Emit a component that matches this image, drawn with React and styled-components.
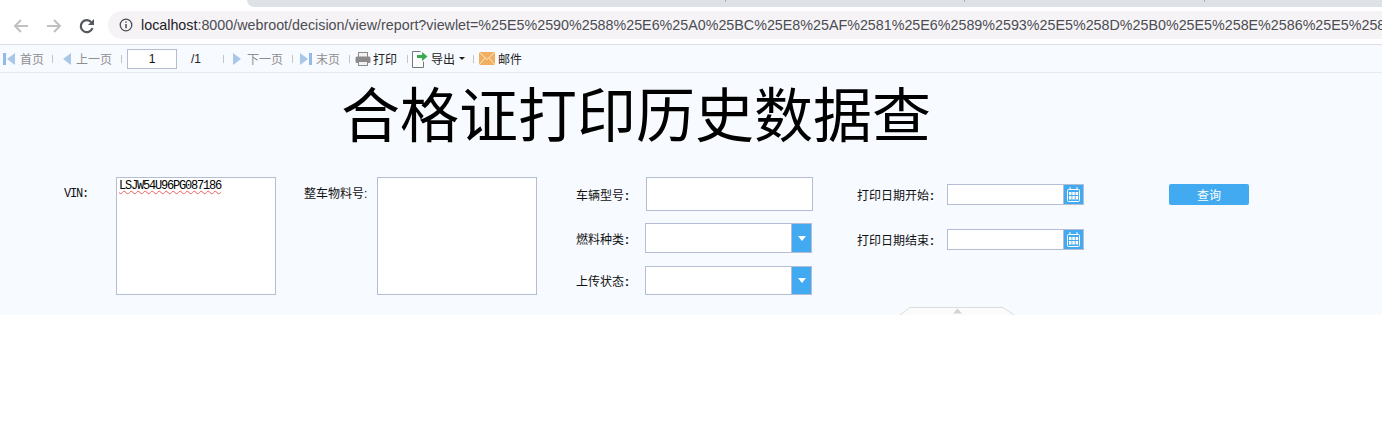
import React from 'react';
import styled, { createGlobalStyle } from 'styled-components';

const Global = createGlobalStyle`
  html, body { margin: 0; padding: 0; background: #fff; }
  body { font-family: "Liberation Sans", "Noto Sans CJK SC", sans-serif; font-size: 12px; color: #000; overflow: hidden; }
`;

const TabStrip = styled.div`
  height: 7px;
  padding-left: 247px;
`;
const TabFill = styled.div`
  height: 7px;
  display: flex;
  background: #dee1e6;
  border-bottom-left-radius: 8px;
`;
const TabSlot = styled.div`
  width: ${p => p.$w}px;
  height: 2px;
  box-sizing: border-box;
  border-right: 1px solid #a9aeb4;
`;
const BrowserBar = styled.div`
  height: 37px;
  display: flex;
  align-items: center;
  border-bottom: 1px solid #dcdce4;
  box-sizing: content-box;
  overflow: hidden;
`;
const NavIcons = styled.div`
  display: flex;
  align-items: center;
  gap: 15px;
  padding-left: 12px;
  width: 108px;
  box-sizing: border-box;
  flex: none;
`;
const Omnibox = styled.div`
  flex: 1;
  height: 28px;
  margin-top: -1px;
  background: #f6f3f7;
  border-radius: 14px 0 0 14px;
  display: flex;
  align-items: center;
  padding-left: 11px;
  gap: 8px;
  white-space: nowrap;
  overflow: hidden;
  font-size: 14.3px;
  color: #4a4d52;
`;
const Host = styled.span`
  color: #202124;
`;

const Toolbar = styled.div`
  height: 27px;
  background: #f7faff;
  border-bottom: 1px solid #e8e9ef;
  display: flex;
  align-items: center;
  padding-left: 3px;
`;
const ToolItem = styled.div`
  display: flex;
  align-items: center;
  gap: ${p => p.$gap ?? 2}px;
  color: ${p => (p.$off ? '#8f8f8f' : '#222')};
  white-space: nowrap;
`;
const Sep = styled.div`
  width: 1px;
  height: 8px;
  background: #c4c4c4;
  flex: none;
  margin: 0 ${p => p.$r}px 0 ${p => p.$l}px;
`;
const PageInput = styled.div`
  width: 48px;
  height: 18px;
  border: 1px solid #b4bdd3;
  background: #fff;
  text-align: center;
  line-height: 18px;
  color: #111;
`;
const PageTotal = styled.span`
  margin-left: 14px;
  width: 27px;
  color: #222;
`;
const Caret = styled.span`
  width: 0;
  height: 0;
  border-left: 3px solid transparent;
  border-right: 3px solid transparent;
  border-top: 3px solid #222;
  margin-left: 1px;
`;

const FormPanel = styled.div`
  position: relative;
  display: flow-root;
  height: 242px;
  background: #f7faff;
`;
const Title = styled.h1`
  margin: -4px 0 0;
  height: 108px;
  padding-left: 341px;
  font-family: "Noto Sans CJK SC", sans-serif;
  font-weight: 400;
  font-size: 59px;
  line-height: 86px;
  white-space: nowrap;
  color: #000;
`;
const Fields = styled.div`
  display: flex;
  align-items: flex-start;
  padding-left: 64px;
`;
const Field = styled.div`
  display: flex;
  align-items: flex-start;
  width: ${p => p.$w}px;
  flex: none;
`;
const Label = styled.label`
  flex: none;
  width: ${p => p.$w}px;
  height: 34px;
  line-height: 34px;
  white-space: nowrap;
  color: #111;
`;
const MonoLabel = styled(Label)`
  font-family: "Liberation Mono", monospace;
  font-size: 12px;
  letter-spacing: -1.2px;
`;
const TextBox = styled.div`
  width: 160px;
  height: 118px;
  box-sizing: border-box;
  border: 1px solid #b4bdd3;
  background: #fff;
  padding: 2px;
  font-family: "Liberation Mono", monospace;
  font-size: 12px;
  letter-spacing: -1.2px;
  line-height: 13px;
  color: #000;
`;
const Misspelled = styled.span`
  text-decoration: underline wavy #f25a5a 1px;
  text-underline-offset: 1px;
`;
const Stack = styled.div`
  display: flex;
  flex-direction: column;
  width: ${p => p.$w}px;
  padding-top: ${p => p.$top ?? 0}px;
  box-sizing: border-box;
  flex: none;
`;
const Row = styled.div`
  display: flex;
  align-items: center;
  height: ${p => p.$h}px;
  margin-bottom: ${p => p.$mb ?? 0}px;
`;
const RowLabel = styled.span`
  flex: none;
  width: ${p => p.$w}px;
  white-space: nowrap;
  color: #111;
`;
const Colon = styled.span`
  margin-left: 1px;
  font-weight: 700;
`;
const Input = styled.div`
  width: 167px;
  height: 34px;
  box-sizing: border-box;
  margin-left: 1px;
  border: 1px solid #b4bdd3;
  background: #fff;
`;
const Select = styled.div`
  width: 167px;
  height: ${p => p.$h}px;
  box-sizing: border-box;
  border: 1px solid #b4bdd3;
  background: #fff;
  display: flex;
  justify-content: flex-end;
`;
const SelectArrow = styled.div`
  width: 19px;
  background: #42aaf0;
  border-left: 1px solid #b4bdd3;
  display: flex;
  align-items: center;
  justify-content: center;
  &::after {
    content: '';
    border-left: 4px solid transparent;
    border-right: 4px solid transparent;
    border-top: 5px solid #fff;
  }
`;
const DateBox = styled.div`
  width: 137px;
  height: 21px;
  box-sizing: border-box;
  border: 1px solid #b4bdd3;
  background: #fff;
  display: flex;
  justify-content: flex-end;
`;
const DateButton = styled.div`
  width: 19px;
  background: #42aaf0;
  border-left: 1px solid #b4bdd3;
  display: flex;
  align-items: center;
  justify-content: center;
`;
const QueryButton = styled.button`
  width: 80px;
  height: 21px;
  border: 0;
  padding: 0;
  border-radius: 2px;
  background: #42aaf0;
  color: #fff;
  font: inherit;
  margin-top: 7px;
`;
const CollapseTab = styled.div`
  position: absolute;
  left: 899px;
  bottom: 0;
  width: 116px;
  height: 8px;
  line-height: 0;
`;

const NavArrow = ({ flip, color }) => (
  <svg width="18" height="18" viewBox="0 0 18 18" fill="none" stroke={color} strokeWidth="2" style={flip ? { transform: 'scaleX(-1)' } : undefined}>
    <path d="M16 9H3M9 3 3 9l6 6" />
  </svg>
);
const Reload = () => (
  <svg width="18" height="18" viewBox="0 0 18 18" fill="none">
    <path d="M14.5 11a6 6 0 1 1-1-5.6" stroke="#55585d" strokeWidth="2.2" />
    <path d="M16 2v6h-6z" fill="#55585d" />
  </svg>
);
const InfoIcon = () => (
  <svg width="14" height="14" viewBox="0 0 14 14" fill="none" style={{ flex: 'none' }}>
    <circle cx="7" cy="7" r="5.8" stroke="#4a4d52" strokeWidth="1.3" />
    <path d="M7 6v4.2M7 3.4v1.4" stroke="#4a4d52" strokeWidth="1.5" />
  </svg>
);
const PageIcon = ({ dir, edge }) => (
  <svg width="14" height="14" viewBox="0 0 14 14" style={dir === 'right' ? { transform: 'scaleX(-1)' } : undefined}>
    {edge && <rect x="0" y="1" width="3" height="12" fill="#8fbbe6" />}
    <path d={edge ? 'M12 1v12L4 7z' : 'M11 1v12L3 7z'} fill="#a9c8e8" />
  </svg>
);
const PrintIcon = () => (
  <svg width="16" height="14" viewBox="0 0 16 14">
    <rect x="3.500" y=".5" width="9" height="5" fill="#f2f2f2" stroke="#8b8b8b" />
    <rect x="0.5" y="4.5" width="15" height="6.500" rx="1.500" fill="#8b8b8b" />
    <rect x="3.500" y="9.500" width="9" height="4" fill="#f2f2f2" stroke="#8b8b8b" />
  </svg>
);
const ExportIcon = () => (
  <svg width="16" height="18" viewBox="0 0 16 18">
    <path d="M.5 1.500h8M.5 1.500v16h11v-6" fill="#fff" stroke="#777" />
    <path d="M5 5h5V2l5.500 4.500L10 11V8H5z" fill="#3aaa4e" />
  </svg>
);
const MailIcon = () => (
  <svg width="16" height="13" viewBox="0 0 16 13">
    <rect width="16" height="13" fill="#f0b060" />
    <path d="M0 0 8 7.500 16 0M0 13l6-7M16 13l-6-7" fill="none" stroke="#fbe6c6" strokeWidth="1" />
  </svg>
);
const CalendarIcon = () => (
  <svg width="13" height="15" viewBox="0 0 13 15" fill="none" stroke="#fff">
    <rect x=".5" y="2.500" width="12" height="12" rx="1" />
    <path d="M3 0v3M10 0v3" />
    <path d="M2 5h2.500v3H2zM5.300 5h2.500v3H5.300zM8.600 5h2.500v3H8.600zM2 9h2.500v3.500H2zM5.300 9h2.500v3.500H5.300zM8.600 9h2.500v3.500H8.600z" fill="#fff" stroke="none" />
  </svg>
);

export default function App() {
  return (
    <>
      <Global />
      <TabStrip>
        <TabFill>
          <TabSlot $w={479} />
          <TabSlot $w={239} />
          <TabSlot $w={240} />
        </TabFill>
      </TabStrip>
      <BrowserBar>
        <NavIcons>
          <NavArrow color="#c0c0c0" />
          <NavArrow color="#c0c0c0" flip />
          <Reload />
        </NavIcons>
        <Omnibox>
          <InfoIcon />
          <span><Host>localhost</Host>:8000/webroot/decision/view/report?viewlet=%25E5%2590%2588%25E6%25A0%25BC%25E8%25AF%2581%25E6%2589%2593%25E5%258D%25B0%25E5%258E%2586%25E5%258</span>
        </Omnibox>
      </BrowserBar>
      <Toolbar>
        <ToolItem $off $gap={3}><PageIcon edge />首页</ToolItem>
        <Sep $l={8} $r={7} />
        <ToolItem $off><PageIcon />上一页</ToolItem>
        <Sep $l={9} $r={5} />
        <PageInput>1</PageInput>
        <PageTotal>/1</PageTotal>
        <Sep $l={5} $r={6} />
        <ToolItem $off $gap={3}><PageIcon dir="right" />下一页</ToolItem>
        <Sep $l={9} $r={5} />
        <ToolItem $off $gap={4}><PageIcon dir="right" edge />末页</ToolItem>
        <Sep $l={9} $r={5} />
        <ToolItem><PrintIcon />打印</ToolItem>
        <Sep $l={10} $r={4} />
        <ToolItem $gap={3}><ExportIcon />导出<Caret /></ToolItem>
        <Sep $l={8} $r={5} />
        <ToolItem $gap={3}><MailIcon />邮件</ToolItem>
      </Toolbar>
      <FormPanel>
        <Title>合格证打印历史数据查</Title>
        <Fields>
          <Field $w={240}>
            <MonoLabel $w={52}>VIN:</MonoLabel>
            <TextBox><Misspelled>LSJW54U96PG087186</Misspelled></TextBox>
          </Field>
          <Field $w={272}>
            <Label $w={73}>整车物料号:</Label>
            <TextBox />
          </Field>
          <Stack $w={281}>
            <Row $h={34} $mb={12}><RowLabel $w={69}>车辆型号<Colon>:</Colon></RowLabel><Input /></Row>
            <Row $h={30} $mb={13}>
              <RowLabel $w={69}>燃料种类<Colon>:</Colon></RowLabel>
              <Select $h={30}><SelectArrow /></Select>
            </Row>
            <Row $h={29}>
              <RowLabel $w={69}>上传状态<Colon>:</Colon></RowLabel>
              <Select $h={29}><SelectArrow /></Select>
            </Row>
          </Stack>
          <Stack $w={312} $top={7}>
            <Row $h={21} $mb={24}>
              <RowLabel $w={90}>打印日期开始<Colon>:</Colon></RowLabel>
              <DateBox><DateButton><CalendarIcon /></DateButton></DateBox>
            </Row>
            <Row $h={21}>
              <RowLabel $w={90}>打印日期结束<Colon>:</Colon></RowLabel>
              <DateBox><DateButton><CalendarIcon /></DateButton></DateBox>
            </Row>
          </Stack>
          <QueryButton>查询</QueryButton>
        </Fields>
        <CollapseTab>
          <svg width="116" height="8" viewBox="0 0 116 8" fill="none">
            <path d="M1 8 11 .5h93L115 8" stroke="#dcdcdc" fill="#fbfbfc" />
            <path d="M54 6.500 58.500 1.500 63 6.500z" fill="#d4d4d4" />
          </svg>
        </CollapseTab>
      </FormPanel>
    </>
  );
}
